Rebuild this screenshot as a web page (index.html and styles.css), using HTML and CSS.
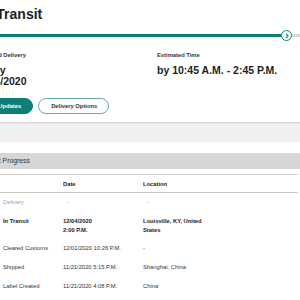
FILE: index.html
```html
<!DOCTYPE html>
<html lang="en">
<head>
    <meta charset="UTF-8">
    <meta name="viewport" content="width=device-width, initial-scale=1.0">
    <title>Track Package</title>
    <link rel="stylesheet" href="styles.css">
</head>
<body>
    <div class="page">
        <section class="status">
            <h1 class="status-title">In Transit</h1>

            <div class="track">
                <div class="track-fill"></div>
                <span class="track-dot">
                    <svg width="6" height="6" viewBox="0 0 6 6">
                        <path d="M2.2 1.2 L4 3 L2.2 4.8" fill="none" stroke="#0d7f78" stroke-width="1.1" stroke-linecap="round" stroke-linejoin="round"/>
                    </svg>
                </span>
                <div class="track-rest"></div>
            </div>

            <div class="eta">
                <div class="eta-col eta-date">
                    <div class="eta-label">Estimated Delivery</div>
                    <div class="eta-value">Friday<br>12/04/2020</div>
                </div>
                <div class="eta-col">
                    <div class="eta-label">Estimated Time</div>
                    <div class="eta-value">by 10:45 A.M. - 2:45 P.M.</div>
                </div>
            </div>

            <div class="actions">
                <button class="btn btn-primary" type="button">Get Updates</button>
                <button class="btn btn-outline" type="button">Delivery Options</button>
            </div>
        </section>

        <div class="divider"></div>

        <section class="progress">
            <h2 class="progress-head">Shipment Progress</h2>
            <table class="progress-table">
                <thead>
                    <tr>
                        <th class="col-activity"></th>
                        <th class="col-date">Date</th>
                        <th class="col-location">Location</th>
                        <th></th>
                    </tr>
                </thead>
                <tbody>
                    <tr class="row-pending">
                        <td>Delivery</td>
                        <td class="dash">-</td>
                        <td class="dash">-</td>
                        <td></td>
                    </tr>
                    <tr class="row-current">
                        <td>In Transit</td>
                        <td>12/04/2020<br>2:00 P.M.</td>
                        <td>Louisville, KY, United States</td>
                        <td></td>
                    </tr>
                    <tr>
                        <td>Cleared Customs</td>
                        <td>12/01/2020 10:26 P.M.</td>
                        <td>-</td>
                        <td></td>
                    </tr>
                    <tr>
                        <td>Shipped</td>
                        <td>11/21/2020 5:15 P.M.</td>
                        <td>Shanghai, China</td>
                        <td></td>
                    </tr>
                    <tr>
                        <td>Label Created</td>
                        <td>11/21/2020 4:08 P.M.</td>
                        <td>China</td>
                        <td></td>
                    </tr>
                </tbody>
            </table>
        </section>
    </div>
</body>
</html>
```

FILE: styles.css
```css
* {
    margin: 0;
    padding: 0;
    box-sizing: border-box;
}

body {
    font-family: "Liberation Sans", Arial, sans-serif;
    background-color: #ffffff;
    color: #333;
    overflow: hidden;
}

.page {
    width: 300px;
    overflow: hidden;
}

/* Status block */
.status {
    margin-left: -26px;
}

.status-title {
    font-size: 14px;
    line-height: 16px;
    font-weight: 700;
    color: #1e1e1e;
    margin-top: 6px;
    margin-left: 6px;
}

.track {
    display: flex;
    align-items: center;
    height: 11px;
    margin-top: 8px;
}

.track-fill {
    flex: 1;
    height: 3px;
    background-color: #0d7f78;
}

.track-dot {
    width: 11px;
    height: 11px;
    border: 1.5px solid #0d7f78;
    border-radius: 50%;
    background-color: #fff;
    display: flex;
    align-items: center;
    justify-content: center;
}

.track-rest {
    width: 8px;
    height: 3px;
    background-color: #d9d9d9;
}

.eta {
    display: flex;
    margin-top: 10px;
}

.eta-col {
    flex: 1;
}

.eta-date {
    flex: 0 0 183px;
}

.eta-label {
    font-size: 5.8px;
    line-height: 8px;
    font-weight: 700;
    color: #333;
}

.eta-value {
    font-size: 10.5px;
    line-height: 11px;
    font-weight: 700;
    color: #1e1e1e;
    margin-top: 6px;
}

.actions {
    display: flex;
    gap: 5px;
    margin-top: 11px;
}

.btn {
    font-family: inherit;
    font-size: 5.8px;
    font-weight: 700;
    line-height: 14px;
    padding: 0 11px 0 12px;
    border-radius: 9px;
    border: 1px solid #0d7f78;
    cursor: pointer;
}

.btn-primary {
    background-color: #0d7f78;
    color: #fff;
}

.btn-outline {
    background-color: #fff;
    color: #333;
    border-color: #62aea9;
}

.divider {
    margin-top: 8px;
    height: 20px;
    background-color: #f0f0f0;
    border-top: 1px solid #d9d9d9;
    box-shadow: inset 0 1px 0 #e6e6e6;
}

/* Progress table */
.progress {
    margin-top: 11px;
}

.progress-head {
    font-size: 6.8px;
    line-height: 16px;
    font-weight: 400;
    color: #333;
    background-color: #d6d6d6;
    text-indent: -28px;
    white-space: nowrap;
    overflow: hidden;
}

.progress-table {
    width: 298px;
    margin-top: 5px;
    border-collapse: collapse;
    font-size: 5.8px;
    color: #333;
}

.progress-table th {
    text-align: left;
    font-weight: 700;
    line-height: 8px;
    padding: 5px 3px 4px;
    border-top: 1px solid #d3cdc5;
    border-bottom: 1px solid #cdc7be;
    color: #222;
}

.progress-table td {
    vertical-align: top;
    line-height: 9px;
    padding: 5px 3px;
}

.col-activity {
    width: 60px;
}

.col-date {
    width: 80px;
}

.col-location {
    width: 76px;
}

.row-pending td {
    color: #a3a3a3;
}

.row-pending .dash {
    padding-left: 7px;
}

.row-current td {
    font-weight: 700;
    color: #222;
    line-height: 8.5px;
}
```
